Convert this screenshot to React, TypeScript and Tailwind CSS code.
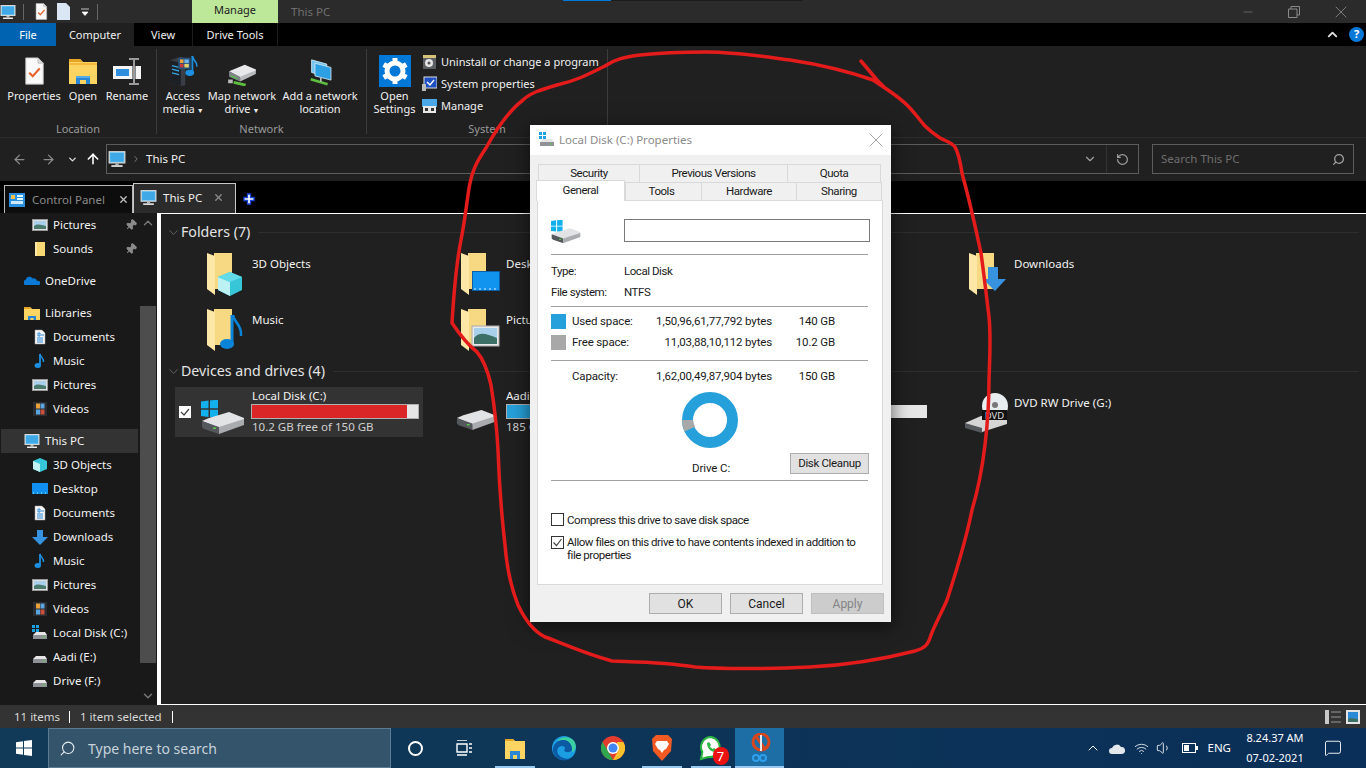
import { ChevronDown, ChevronUp, ArrowLeft, ArrowRight, ArrowUp, RotateCw, Search, Pin, Wifi, Volume1, X, Minus, MessageSquare } from "lucide-react";
import type { ReactNode } from "react";

function PcIcon({ size = 16 }: { size?: number }) {
  return (
    <svg width={size} height={size} viewBox="0 0 16 16">
      <rect x="1" y="1.5" width="14" height="10" fill="#7fd0f5" stroke="#d8d8d8" />
      <rect x="2" y="2.5" width="12" height="8" fill="#3fa9e8" />
      <rect x="6.5" y="12" width="3" height="1.5" fill="#bbb" />
      <rect x="3" y="13.5" width="10" height="1.5" fill="#e8e8e8" />
    </svg>
  );
}

function PagePropsIcon({ h = 28 }: { h?: number }) {
  return (
    <svg width={h * 0.75} height={h} viewBox="0 0 24 32">
      <path d="M2 1h14l6 6v24H2z" fill="#fafafa" stroke="#bbb" />
      <path d="M16 1v6h6" fill="#ddd" stroke="#bbb" />
      <path d="M6 18l4 4 8-9" fill="none" stroke="#e8632c" strokeWidth="2.5" />
    </svg>
  );
}

function OpenFolderIcon() {
  return (
    <svg width="28" height="25" viewBox="0 0 28 25">
      <path d="M0 0h11l3 3h14v22H0z" fill="#fcd462" />
      <path d="M0 0h11l3 3H0z" fill="#e5a526" />
      <path d="M0 4h28v2H0z" fill="#f4b93c" />
      <path d="M7 25v-8h14v8h-4v-4h-6v4z" fill="#2b87d3" />
      <path d="M7 17h14v2H7z" fill="#56abe8" />
    </svg>
  );
}

function RenameIcon() {
  return (
    <svg width="28" height="27" viewBox="0 0 28 27">
      <rect x="0" y="8" width="28" height="13" fill="#f5f5f5" />
      <rect x="3" y="11" width="13" height="7" fill="#2f8fde" />
      <rect x="19" y="8" width="4" height="13" fill="#8a8a8a" />
      <path d="M16 1h10M21 1v25M16 26h10" stroke="#9a9a9a" strokeWidth="2" fill="none" />
    </svg>
  );
}

function MediaIcon() {
  return (
    <svg width="31" height="32" viewBox="0 0 34 36">
      <path d="M2 6l12-4 5 2v30l-5 1-12-3z" fill="#3a3f47" />
      <path d="M2 6l12 3v26L2 32z" fill="#1d2024" />
      <path d="M4 12l8 2M4 16l8 2M4 20l8 2" stroke="#36a3e0" strokeWidth="1.5" />
      <rect x="11" y="3" width="14" height="13" fill="#28507a" />
      <rect x="13" y="5" width="4" height="4" fill="#e9a33a" />
      <rect x="18" y="5" width="5" height="4" fill="#6fb4e6" />
      <rect x="13" y="10" width="4" height="4" fill="#c93d3d" />
      <rect x="18" y="10" width="5" height="4" fill="#e0d16a" />
      <path d="M27 1c0 5 6 6 5 12" stroke="#1c8fe0" strokeWidth="2" fill="none" />
      <path d="M27 1v18" stroke="#1c8fe0" strokeWidth="2" />
      <ellipse cx="24" cy="20" rx="5" ry="3.5" fill="#1c8fe0" />
    </svg>
  );
}

function NetDriveIcon() {
  return (
    <svg className="mt-[6px]" width="32" height="24" viewBox="0 0 34 26">
      <path d="M3 10l17-7 12 5v2L15 17z" fill="#e8e8ea" />
      <path d="M3 10l12 6v5L3 16z" fill="#7f8286" />
      <path d="M15 16l17-7v4l-17 8z" fill="#b8babd" />
      <path d="M5 15l7 3" stroke="#58c34a" strokeWidth="1.5" />
      <path d="M8 22l13 3" stroke="#5fbf3f" strokeWidth="3" />
      <rect x="2" y="19" width="5" height="4" fill="#bbb" />
    </svg>
  );
}

function NetLocIcon() {
  return (
    <svg className="mt-[3px]" width="28" height="27" viewBox="0 0 30 32">
      <path d="M5 1l18 5v15L5 16z" fill="#74c6ef" stroke="#d0e6f2" />
      <path d="M9 5l19 5v15L9 20z" fill="#2d9fe3" stroke="#d0e6f2" />
      <path d="M4 24l20 6" stroke="#5fbf3f" strokeWidth="3" />
      <path d="M16 22v5" stroke="#bbb" strokeWidth="2" />
    </svg>
  );
}

function GearTileIcon() {
  return (
    <svg width="32" height="32" viewBox="0 0 32 32">
      <rect width="32" height="32" fill="#0078d7" />
      <circle cx="16" cy="16" r="8" fill="none" stroke="#fff" strokeWidth="5" />
      <path d="M16 3v6M16 23v6M4.700 9.500l5 3M22.300 19.500l5 3M4.700 22.500l5-3M22.300 12.500l5-3" stroke="#fff" strokeWidth="5" />
    </svg>
  );
}

function WinLogo({ size = 16, color = "#1ba1e2" }: { size?: number; color?: string }) {
  return (
    <svg width={size} height={size} viewBox="0 0 16 16">
      <path d="M0 2.2l7-1v6.3H0zM8 1l8-1v7.5H8zM0 8.5h7v6.3l-7-1zM8 8.500h8V16l-8-1z" fill={color} />
    </svg>
  );
}

function DriveSmall({ win = false }: { win?: boolean }) {
  return (
    <svg width="16" height="16" viewBox="0 0 16 16">
      {win && <path d="M0 0h3v3H0zM4 0h3v3H4zM0 4h3v3H0zM4 4h3v3H4z" fill="#1ba1e2" />}
      <path d="M1 10l3-3h9l2 3z" fill="#e5e5e5" />
      <rect x="1" y="10" width="14" height="4" fill="#8f9296" />
      <rect x="11" y="11.5" width="2" height="1" fill="#61d04f" />
    </svg>
  );
}

function DriveLarge({ win = false, w = 44 }: { win?: boolean; w?: number }) {
  return (
    <svg width={w} height={(w * 34) / 44} viewBox="0 0 44 34">
      {win && <path d="M0 1.500l7.500-1v7.800H0zM9 .5L17-.5v8.800H9zM0 9.700h7.500V17L0 16zM9 9.700h8V18l-8-1z" fill="#13b0ee" />}
      <path d="M1 21l7-3 20-6 15 6v3L18 28z" fill="#e2e3e5" />
      <path d="M1 21l17 6v7L3 29l-2-2z" fill="#54575b" />
      <path d="M18 27l25-8v6l-25 9z" fill="#a9abae" />
      <rect x="12" y="27.500" width="3" height="1.500" fill="#58d04a" />
    </svg>
  );
}

function FolderBase({ children }: { children?: ReactNode }) {
  return (
    <svg width="40" height="43" viewBox="0 0 40 43">
      <path d="M7 0h18v36H7z" fill="#f7d883" />
      <path d="M0 0l8 3v39l-8-6z" fill="#fde7a6" />
      {children}
    </svg>
  );
}

function FolderTile({ kind }: { kind: string }) {
  if (kind === "cube") {
    return (
      <FolderBase>
        <path d="M11 24l12-5 12 5v13l-12 6-12-6z" fill="#36c6d8" />
        <path d="M11 24l12 5v14l-12-6z" fill="#bdf2f4" />
        <path d="M23 29l12-5-12-5-12 5z" fill="#64dbe8" />
      </FolderBase>
    );
  }
  if (kind === "note") {
    return (
      <FolderBase>
        <path d="M25 6v29" stroke="#0a84d8" strokeWidth="3" />
        <path d="M26 6c1 8 9 9 8 21" stroke="#0a84d8" strokeWidth="2.500" fill="none" />
        <ellipse cx="20" cy="35" rx="7" ry="5" fill="#0a84d8" />
      </FolderBase>
    );
  }
  if (kind === "desk") {
    return (
      <FolderBase>
        <rect x="11.500" y="18.500" width="27" height="19" fill="#1094f0" stroke="#0a5fa8" />
        <path d="M13 36h25" stroke="#d8efff" strokeWidth="1" strokeDasharray="2 3" />
      </FolderBase>
    );
  }
  if (kind === "pic") {
    return (
      <FolderBase>
        <rect x="11" y="17" width="27" height="20" fill="#eaeaea" stroke="#aaa" />
        <rect x="13" y="19" width="23" height="16" fill="#a9d0ea" />
        <path d="M13 29c6-7 12-4 23 0v6H13z" fill="#3c6f66" />
      </FolderBase>
    );
  }
  return (
    <FolderBase>
      <path d="M19 14h10v12h8L26 38 14 26h5z" fill="#3793e0" />
    </FolderBase>
  );
}

function DvdIcon() {
  return (
    <svg width="44" height="40" viewBox="0 0 44 40">
      <circle cx="31" cy="13" r="13" fill="#e8eef0" />
      <circle cx="31" cy="12" r="3" fill="#777" />
      <path d="M1 30l16-7 26 2v6L18 39 1 34z" fill="#d5d5d5" />
      <path d="M1 30l17 5v5L1 35z" fill="#55585c" />
      <rect x="18" y="17" width="25" height="10" fill="#111" />
      <text x="30.500" y="25.500" fontSize="9.500" fill="#ddd" textAnchor="middle" fontFamily="Noto Sans">DVD</text>
    </svg>
  );
}

function NavIcon({ kind }: { kind: string }) {
  switch (kind) {
    case "pictures":
      return (
        <svg width="16" height="16" viewBox="0 0 16 16">
          <rect x="0.5" y="2.5" width="15" height="11" fill="#ddd" stroke="#999" />
          <rect x="2" y="4" width="12" height="8" fill="#a9d0ea" />
          <path d="M2 9c4-3 7-1 12 0v3H2z" fill="#4a7a6c" />
        </svg>
      );
    case "sounds":
      return (
        <svg width="16" height="16" viewBox="0 0 16 16">
          <path d="M3 1h10v14H3z" fill="#f8d775" />
          <path d="M3 1h2v14H3z" fill="#fde7a6" />
        </svg>
      );
    case "onedrive":
      return (
        <svg width="16" height="16" viewBox="0 0 16 16">
          <path d="M1 12a2.600 2.600 0 0 1 .6-5 4 4 0 0 1 7.200-1.600A3.400 3.400 0 0 1 13 8a2.200 2.200 0 0 1 2 4z" fill="#0a7ad6" />
        </svg>
      );
    case "libraries":
      return (
        <svg width="16" height="16" viewBox="0 0 16 16">
          <path d="M0 2h6l2 2h8v11H0z" fill="#fcd462" />
          <path d="M0 2h6l2 2H0z" fill="#e5a526" />
          <path d="M4 15v-4h8v4H9.500v-2h-3v2z" fill="#2b87d3" />
        </svg>
      );
    case "docs":
      return (
        <svg width="16" height="16" viewBox="0 0 16 16">
          <path d="M3 1h7l3 3v11H3z" fill="#f4f4f4" stroke="#aaa" strokeWidth=".5" />
          <path d="M6 4h2v3H6zM9 6h3M5 9h6M5 11h6M5 13h6" stroke="#2b8ad8" strokeWidth="1" fill="none" />
        </svg>
      );
    case "music":
      return (
        <svg width="16" height="16" viewBox="0 0 16 16">
          <path d="M8 1v11" stroke="#1c8fe0" strokeWidth="1.800" />
          <path d="M8 1c1 4 4 4 3.500 8" stroke="#1c8fe0" strokeWidth="1.500" fill="none" />
          <ellipse cx="5.800" cy="12.500" rx="3.200" ry="2.500" fill="#1c8fe0" />
        </svg>
      );
    case "videos":
      return (
        <svg width="16" height="16" viewBox="0 0 16 16">
          <rect x="1" y="1" width="14" height="14" fill="#2a2c30" />
          <rect x="4" y="2.500" width="4" height="5" fill="#e9a33a" />
          <rect x="8.500" y="2.500" width="4" height="5" fill="#5aa5e0" />
          <rect x="4" y="8.500" width="4" height="5" fill="#5aa5e0" />
          <rect x="8.500" y="8.500" width="4" height="5" fill="#c9503d" />
        </svg>
      );
    case "cube":
      return (
        <svg width="16" height="16" viewBox="0 0 16 16">
          <path d="M1 4l7-3 7 3v8l-7 3-7-3z" fill="#36c6d8" />
          <path d="M1 4l7 3v8l-7-3z" fill="#c2f2f4" />
        </svg>
      );
    case "desktop":
      return (
        <svg width="16" height="16" viewBox="0 0 16 16">
          <rect x="0" y="2" width="16" height="11" fill="#0f8ff0" />
          <path d="M1 12h14" stroke="#dff" strokeWidth=".8" strokeDasharray="1 3" />
        </svg>
      );
    case "downloads":
      return (
        <svg width="16" height="16" viewBox="0 0 16 16">
          <path d="M5 1h6v7h5l-8 8-8-8h5z" fill="#3793e0" />
        </svg>
      );
    case "cdrive":
      return <DriveSmall win />;
    case "drive":
      return <DriveSmall />;
    default:
      return <PcIcon />;
  }
}

type NavRow = { label: string; icon: string; indent: boolean; pin?: boolean; gap?: boolean; selected?: boolean };

const navRows: NavRow[] = [
  { label: "Pictures", icon: "pictures", indent: true, pin: true },
  { label: "Sounds", icon: "sounds", indent: true, pin: true },
  { label: "OneDrive", icon: "onedrive", indent: false, gap: true },
  { label: "Libraries", icon: "libraries", indent: false, gap: true },
  { label: "Documents", icon: "docs", indent: true },
  { label: "Music", icon: "music", indent: true },
  { label: "Pictures", icon: "pictures", indent: true },
  { label: "Videos", icon: "videos", indent: true },
  { label: "This PC", icon: "pc", indent: false, gap: true, selected: true },
  { label: "3D Objects", icon: "cube", indent: true },
  { label: "Desktop", icon: "desktop", indent: true },
  { label: "Documents", icon: "docs", indent: true },
  { label: "Downloads", icon: "downloads", indent: true },
  { label: "Music", icon: "music", indent: true },
  { label: "Pictures", icon: "pictures", indent: true },
  { label: "Videos", icon: "videos", indent: true },
  { label: "Local Disk (C:)", icon: "cdrive", indent: true },
  { label: "Aadi (E:)", icon: "drive", indent: true },
  { label: "Drive (F:)", icon: "drive", indent: true },
];

function Sidebar() {
  return (
    <aside className="flex w-[157px] shrink-0 bg-[#191919]">
      <div className="w-[140px] shrink-0">
        {navRows.map((row, i) => (
          <div key={i} className={row.gap ? "mt-2" : ""}>
            <div className={`relative flex h-6 items-center ${row.indent ? "pl-8" : "pl-6"} ${row.selected ? "ml-px mr-[2px] bg-[#333333] pl-[23px]" : ""}`}>
              <NavIcon kind={row.icon} />
              <span className="ml-[5px] text-[11.5px] text-[#f2f2f2]">{row.label}</span>
              {row.pin && <Pin size={12} className="absolute right-[3px] top-[6px] rotate-45 fill-[#8a8a8a] text-[#8a8a8a]" />}
            </div>
          </div>
        ))}
      </div>
      <div className="flex w-[16px] shrink-0 flex-col">
        <div className="flex h-[93px] justify-center pt-[3px]">
          <ChevronUp size={14} className="text-[#777777]" strokeWidth={2.5} />
        </div>
        <div className="h-[357px] bg-[#4d4d4d]" />
        <div className="flex flex-1 items-end justify-center pb-[2px]">
          <ChevronDown size={14} className="text-[#777777]" strokeWidth={2.5} />
        </div>
      </div>
    </aside>
  );
}

function SectionHead({ title }: { title: string }) {
  return (
    <div className="flex h-[24px] items-center">
      <ChevronDown size={15} className="ml-[4px] text-[#777777]" strokeWidth={1.2} />
      <span className="text-[14.2px] text-[#e4e4e4]">{title}</span>
      <div className="ml-2 mr-[7px] h-px flex-1 bg-[#2e2e2e]" />
    </div>
  );
}

function FolderCell({ kind, label }: { kind: string; label: string }) {
  return (
    <div className="flex h-[56px] w-[254px] pl-[45px]">
      <div className="w-[45px] shrink-0 pt-[8px]">
        <FolderTile kind={kind} />
      </div>
      <span className="pt-[10px] text-[11.5px] text-[#f2f2f2]">{label}</span>
    </div>
  );
}

function DriveBar({ used, fill }: { used: string; fill: string }) {
  return (
    <div className="h-[15px] w-[168px] border border-[#b0b0b0] bg-[#e6e6e6]">
      <div className={`h-full ${used} ${fill}`} />
    </div>
  );
}

function ExplorerMain() {
  return (
    <main className="relative flex-1 border-y border-l-4 border-white bg-[#202020] pl-[1px] pt-[6px]">
      <SectionHead title="Folders (7)" />
      <div className="mt-[1px] flex flex-wrap">
        <FolderCell kind="cube" label="3D Objects" />
        <FolderCell kind="desk" label="Desktop" />
        <div className="h-[56px] w-[254px]" />
        <FolderCell kind="down" label="Downloads" />
        <FolderCell kind="note" label="Music" />
        <FolderCell kind="pic" label="Pictures" />
      </div>
      <div className="mt-[2px]">
        <SectionHead title="Devices and drives (4)" />
      </div>
      <div className="mt-[4px] flex pl-[13px]">
        <div className="flex h-[50px] w-[248px] bg-[#333333]">
          <div className="ml-1 mt-[19px] flex h-[12px] w-[12px] items-center justify-center bg-white">
            <svg width="10" height="10" viewBox="0 0 10 10">
              <path d="M1 5l3 3 5-6" fill="none" stroke="#444" strokeWidth="1.2" />
            </svg>
          </div>
          <div className="ml-[10px] mt-[13px] w-[50px]">
            <DriveLarge win />
          </div>
          <div>
            <div className="mt-[1px] pl-px text-[11.5px] leading-[16px] text-[#f2f2f2]">Local Disk (C:)</div>
            <DriveBar used="w-[155px]" fill="bg-[#da2626]" />
            <div className="pl-px text-[11.5px] leading-[16px] text-[#d0d0d0]">10.2 GB free of 150 GB</div>
          </div>
        </div>
        <div className="ml-[33px] flex w-[221px]">
          <div className="mt-[12px] w-[50px]">
            <DriveLarge w={40} />
          </div>
          <div>
            <div className="mt-[1px] text-[11.5px] leading-[16px] text-[#f2f2f2]">Aadi (E:)</div>
            <DriveBar used="w-[96px]" fill="bg-[#26a0da]" />
            <div className="text-[11.5px] leading-[16px] text-[#d0d0d0]">185 GB free of 300 GB</div>
          </div>
        </div>
        <div className="flex w-[254px] justify-end pr-[4px]">
          <div className="mt-[18px] h-[13px] w-[60px] bg-[#e6e6e6]" />
        </div>
        <div className="ml-[33px] flex">
          <div className="mt-[6px] w-[50px]">
            <DvdIcon />
          </div>
          <div className="mt-[8px] text-[11.5px] leading-[16px] text-[#f2f2f2]">DVD RW Drive (G:)</div>
        </div>
      </div>
    </main>
  );
}

function RibbonBtn({ w, lines, caret, children }: { w: string; lines: string[]; caret?: boolean; children: ReactNode }) {
  return (
    <div className={`flex shrink-0 flex-col items-center ${w}`}>
      <div className="flex h-[34px] items-center justify-center pb-[2px]">{children}</div>
      <div className="text-center text-[11px] leading-[13px] text-[#f0f0f0]">
        {lines.map((l, i) => (
          <div key={i} className="whitespace-nowrap">
            {l}
            {caret && i === lines.length - 1 && <span className="ml-[2px] align-middle text-[7px]">▼</span>}
          </div>
        ))}
      </div>
    </div>
  );
}

function RibbonGroup({ w, label, children }: { w: string; label: string; children: ReactNode }) {
  return (
    <div className={`flex h-full shrink-0 flex-col border-r border-[#3c3c3c] ${w}`}>
      <div className="flex h-[72px] shrink-0 pt-[6px]">{children}</div>
      <div className="text-center text-[11px] leading-[16px] text-[#9a9a9a]">{label}</div>
    </div>
  );
}

function SmallAction({ label, children }: { label: string; children: ReactNode }) {
  return (
    <div className="flex h-4 items-center gap-[4px]">
      {children}
      <span className="whitespace-nowrap text-[11px] text-[#f0f0f0]">{label}</span>
    </div>
  );
}

function Ribbon() {
  return (
    <div className="flex h-[92px] shrink-0 border-b border-[#2d2d2d] bg-[#202020] py-[3px]">
      <RibbonGroup w="w-[157px]" label="Location">
        <RibbonBtn w="w-[60px] ml-[4px]" lines={["Properties"]}><PagePropsIcon /></RibbonBtn>
        <RibbonBtn w="w-[38px]" lines={["Open"]}><OpenFolderIcon /></RibbonBtn>
        <RibbonBtn w="w-[50px]" lines={["Rename"]}><RenameIcon /></RibbonBtn>
      </RibbonGroup>
      <RibbonGroup w="w-[210px]" label="Network">
        <RibbonBtn w="w-[52px]" lines={["Access", "media"]} caret><MediaIcon /></RibbonBtn>
        <RibbonBtn w="w-[66px]" lines={["Map network", "drive"]} caret><NetDriveIcon /></RibbonBtn>
        <RibbonBtn w="w-[90px]" lines={["Add a network", "location"]}><NetLocIcon /></RibbonBtn>
      </RibbonGroup>
      <RibbonGroup w="w-[241px]" label="System">
        <RibbonBtn w="w-[55px]" lines={["Open", "Settings"]}><GearTileIcon /></RibbonBtn>
        <div className="-mt-px flex flex-col gap-[6px]">
          <SmallAction label="Uninstall or change a program">
            <svg width="15" height="16" viewBox="0 0 15 16"><rect x="1" y="1" width="13" height="14" fill="#5b5f63" /><circle cx="7" cy="9" r="4" fill="#e4e4e4" /><circle cx="7" cy="9" r="1.500" fill="#555" /><rect x="1" y="1" width="13" height="3" fill="#d8c27a" /></svg>
          </SmallAction>
          <SmallAction label="System properties">
            <svg width="15" height="16" viewBox="0 0 15 16"><rect x="2" y="1" width="13" height="11" fill="#1e4fc2" stroke="#ddd" /><path d="M5 6l3 3 4-5" stroke="#fff" fill="none" strokeWidth="1.500" /><rect x="0" y="8" width="4" height="7" fill="#bbb" /></svg>
          </SmallAction>
          <SmallAction label="Manage">
            <svg width="15" height="16" viewBox="0 0 15 16"><rect x="0" y="1" width="15" height="8" fill="#4aa8e8" /><rect x="1" y="8" width="13" height="7" fill="#e8e8e8" /><rect x="3" y="10" width="3" height="3" fill="#333" /><rect x="9" y="10" width="3" height="3" fill="#333" /></svg>
          </SmallAction>
        </div>
      </RibbonGroup>
    </div>
  );
}

function TitleBar() {
  return (
    <div className="relative flex h-[23px] shrink-0 items-center bg-[#2b2b2b]">
      <div className="flex w-[192px] items-center">
        <PcIcon />
        <div className="ml-[7px] h-[16px] w-px bg-[#666666]" />
        <div className="ml-[11px] flex h-[18px] w-[13px] items-center">
          <PagePropsIcon h={17} />
        </div>
        <svg className="ml-[9px]" width="13" height="17" viewBox="0 0 13 17"><path d="M0 0h9l4 4v13H0z" fill="#dbe6f5" /></svg>
        <svg className="ml-[11px]" width="8" height="8" viewBox="0 0 8 8"><path d="M0 1h8M1 4h6L4 7.500z" fill="#fff" stroke="#fff" strokeWidth=".7" /></svg>
        <div className="ml-[8px] h-[16px] w-px bg-[#666666]" />
      </div>
      <div className="flex h-full w-[86px] items-center justify-center bg-[#bde89a] pb-[3px] text-[11px] text-[#202020]">Manage</div>
      <span className="ml-[13px] text-[11.5px] text-[#6f6f6f]">This PC</span>
      <div className="absolute left-[563px] top-0 h-px w-[48px] bg-[#0078d7]" />
      <div className="absolute left-[611px] top-0 h-px w-[192px] bg-[#1c1c1c]" />
      <div className="ml-auto flex items-center text-[#8a8a8a]">
        <Minus size={14} strokeWidth={1} className="mr-[33px]" />
        <svg className="mr-[31px]" width="12" height="12" viewBox="0 0 12 12"><path d="M.5 3h8.500v8.500H.5zM3 3V.5h8.500V9H9" fill="none" stroke="#8a8a8a" /></svg>
        <X size={20} strokeWidth={1} className="mr-[15px]" />
      </div>
    </div>
  );
}

function MenuTabs() {
  return (
    <div className="flex h-[23px] shrink-0 items-center bg-black text-[11px] text-[#f0f0f0]">
      <div className="flex h-full w-[56px] items-center justify-center bg-[#0063b1] pt-px text-white">File</div>
      <div className="flex h-full w-[78px] items-center justify-center bg-[#202020] pt-px">Computer</div>
      <div className="flex h-full w-[58px] items-center justify-center pt-px">View</div>
      <div className="flex h-full w-[86px] items-center justify-center border-x border-[#1c1c1c] pt-px">Drive Tools</div>
      <div className="ml-auto flex items-center">
        <ChevronUp size={15} strokeWidth={3} className="mr-[9px] text-[#e0e0e0]" />
        <div className="mr-[2px] flex h-[15px] w-[15px] items-center justify-center rounded-full bg-[#0a78d7] text-[11px] font-bold text-white">?</div>
      </div>
    </div>
  );
}

function AddressBar() {
  return (
    <div className="flex h-[43px] shrink-0 items-center bg-[#202020] pb-[1px]">
      <div className="flex w-[106px] items-center pl-[12px]">
        <ArrowLeft size={15} className="text-[#8a8a8a]" />
        <ArrowRight size={15} className="ml-[14px] text-[#8a8a8a]" />
        <ChevronDown size={11} strokeWidth={3} className="ml-[11px] text-[#dddddd]" />
        <ArrowUp size={16} strokeWidth={2.4} className="ml-[7px] text-white" />
      </div>
      <div className="flex h-[30px] w-[1033px] items-center border border-[#5c5c5c] pl-[1px]">
        <PcIcon size={18} />
        <ChevronDown size={10} className="ml-[5px] -rotate-90 text-[#8a8a8a]" />
        <span className="ml-[5px] text-[11.5px] text-[#f0f0f0]">This PC</span>
        <div className="ml-auto flex h-full w-[32px] items-center justify-center">
          <ChevronDown size={14} strokeWidth={2} className="text-[#a0a0a0]" />
        </div>
        <div className="flex h-full w-[32px] items-center justify-center border-l border-[#333333]">
          <RotateCw size={13} strokeWidth={2.2} className="-scale-x-100 text-[#a0a0a0]" />
        </div>
      </div>
      <div className="ml-[13px] flex h-[30px] w-[202px] items-center border border-[#5c5c5c] px-[8px]">
        <span className="text-[11.5px] text-[#6f6f6f]">Search This PC</span>
        <Search size={13} strokeWidth={2.4} className="ml-auto -scale-x-100 text-[#a0a0a0]" />
      </div>
    </div>
  );
}

function TabStrip() {
  return (
    <div className="flex h-[32px] shrink-0 items-end bg-black pl-[4px]">
      <div className="flex h-[28px] w-[129px] items-center border-x border-t border-[#b8b8b8] bg-[#0d0d0d] pl-[4px]">
        <svg width="16" height="14" viewBox="0 0 16 14"><rect width="16" height="14" fill="#2a8fe0" /><rect x="2" y="2" width="4" height="4" fill="#f2c14e" /><rect x="8" y="2" width="6" height="2" fill="#dff" /><rect x="8" y="5" width="6" height="2" fill="#dff" /><rect x="2" y="8" width="12" height="3" fill="#cfe8ff" /></svg>
        <span className="ml-[7px] text-[11.5px] text-[#8a8a8a]">Control Panel</span>
        <X size={11} strokeWidth={3} className="ml-auto mr-[3px] text-[#bbbbbb]" />
      </div>
      <div className="flex h-[30px] w-[103px] items-center border-x border-t border-[#c8c8c8] bg-[#2b2b2b] pb-[2px] pl-[6px]">
        <PcIcon size={17} />
        <span className="ml-[6px] text-[11.5px] text-[#f0f0f0]">This PC</span>
        <X size={11} strokeWidth={3} className="ml-auto mr-[11px] text-[#8a8a8a]" />
      </div>
      <svg className="mb-[8px] ml-[7px]" width="12" height="12" viewBox="0 0 12 12"><path d="M4.500 1h3v3.500H11v3H7.500V11h-3V7.500H1v-3h3.500z" fill="#fff" stroke="#1a46d8" strokeWidth="1.300" /></svg>
    </div>
  );
}

function StatusBar() {
  return (
    <div className="flex h-[23px] shrink-0 items-center bg-[#333333] text-[11.5px] text-[#d8d8d8]">
      <span className="ml-[14px]">11 items</span>
      <div className="ml-[9px] h-[12px] w-px bg-white" />
      <span className="ml-[10px]">1 item selected</span>
      <div className="ml-[10px] h-[12px] w-px bg-white" />
      <div className="ml-auto mr-[6px] flex items-center gap-[5px]">
        <svg width="16" height="14" viewBox="0 0 16 14"><rect x="0" y="0" width="4" height="14" fill="#c8c8c8" /><path d="M6 2h10M6 7h10M6 12h10" stroke="#777" strokeWidth="1.500" /></svg>
        <svg width="14" height="14" viewBox="0 0 14 14"><rect width="14" height="14" fill="#e4e4e4" /><rect x="2" y="2" width="10" height="10" fill="#2b8ad8" /><path d="M2 9c4-2 6 0 10 0v3H2z" fill="#3c6f66" /></svg>
      </div>
    </div>
  );
}

function TaskApp({ active, bar, children }: { active?: boolean; bar?: string; children: ReactNode }) {
  return (
    <div className={`relative flex h-full w-[49px] shrink-0 items-center justify-center ${active ? "bg-[#1c6ea4]" : ""}`}>
      {children}
      {bar && <div className={`absolute bottom-0 h-[2px] bg-[#99c9ee] ${bar}`} />}
    </div>
  );
}

function Taskbar() {
  return (
    <div className="flex h-[40px] shrink-0 items-center bg-gradient-to-r from-[#103a57] to-[#0a2f58]">
      <div className="flex w-[48px] justify-center">
        <WinLogo color="#ffffff" />
      </div>
      <div className="flex h-full w-[343px] items-center border border-[#5b7c92] bg-[#34546b] pl-[10px]">
        <Search size={17} strokeWidth={1.5} className="-scale-x-100 text-[#e8eef2]" />
        <span className="ml-[12px] text-[14px] text-[#c7d2da]">Type here to search</span>
      </div>
      <div className="flex h-full">
        <div className="flex w-[49px] items-center justify-center">
          <div className="h-[15px] w-[15px] rounded-full border-2 border-white" />
        </div>
        <div className="flex w-[50px] items-center justify-center pr-[4px]">
          <svg width="18" height="16" viewBox="0 0 18 16"><path d="M3 0h10M3 15h10M3 4h10v8H3zM15 4h3M15 8h3M15 12h3" fill="none" stroke="#fff" strokeWidth="1.400" /></svg>
        </div>
        <TaskApp bar="w-[40px]">
          <svg width="24" height="24" viewBox="0 0 24 24"><path d="M2 3h8l2 2h10v18H2z" fill="#fcd462" /><path d="M2 3h8l2 2H2z" fill="#e5a526" /><path d="M7 23v-8h10v8h-3v-4h-4v4z" fill="#2b87d3" /></svg>
        </TaskApp>
        <TaskApp>
          <svg width="26" height="26" viewBox="0 0 26 26"><circle cx="13" cy="13" r="12" fill="#1b9de2" /><path d="M2 15C2 8 9 4 14 5c6 1 9 6 7 10-2 3-7 3-8 0 2-1 1-4-2-4-4 0-6 4-4 8 2 3 7 6 13 4-3 3-9 3-12 1-3-2-6-5-6-9z" fill="#0c59a4" /><path d="M6 6c4-5 13-5 17 0 3 4 2 10-2 11 1-7-3-12-8-12-3 0-5 0-7 1z" fill="#3bd1a0" /></svg>
        </TaskApp>
        <TaskApp>
          <svg width="24" height="24" viewBox="0 0 24 24"><circle cx="12" cy="12" r="12" fill="#e33b2e" /><path d="M1.600 6L7 15l5 9A12 12 0 0 1 1.600 6z" fill="#2fa84f" /><path d="M22.400 6A12 12 0 0 1 12 24l5-9-1-9z" fill="#fbc02d" /><circle cx="12" cy="12" r="6" fill="#fff" /><circle cx="12" cy="12" r="4.500" fill="#4285f4" /></svg>
        </TaskApp>
        <TaskApp bar="w-[40px]">
          <svg width="24" height="26" viewBox="0 0 24 26"><path d="M6 0h12l4 4-1 12-9 10-9-10L2 4z" fill="#f15a22" /><path d="M7 6h10l2 3-3 5-2 1-2 3-2-3-2-1-3-5z" fill="#fff" /></svg>
        </TaskApp>
        <TaskApp bar="w-[40px]">
          <div className="relative">
            <svg width="24" height="26" viewBox="0 0 24 26"><path d="M12 2a10 10 0 0 0-8.600 15L2 24l7-2A10 10 0 1 0 12 2z" fill="#fff" stroke="#2cb742" strokeWidth="2" /><path d="M8 8c0 5 4 9 8 9l2-2-3-2-1 1c-2-1-3-2-3-3l1-1-2-3z" fill="#2cb742" /></svg>
            <div className="absolute -bottom-[4px] -right-[6px] flex h-[18px] w-[16px] items-center justify-center rounded-full bg-[#ee1111] text-[13px] leading-none text-white">7</div>
          </div>
        </TaskApp>
        <TaskApp active bar="w-[49px]">
          <svg width="22" height="30" viewBox="0 0 22 30"><circle cx="12" cy="9" r="8" fill="none" stroke="#d8461d" strokeWidth="3" /><path d="M6 2l10 14" stroke="#d8461d" strokeWidth="3" /><path d="M12 2v16" stroke="#e8e8e8" strokeWidth="2" /><circle cx="7" cy="25" r="3" fill="none" stroke="#2fa0ee" strokeWidth="2" /><circle cx="14" cy="25" r="3" fill="none" stroke="#2fa0ee" strokeWidth="2" /></svg>
        </TaskApp>
      </div>
      <div className="ml-auto flex h-full items-center text-white">
        <ChevronUp size={16} strokeWidth={1.5} />
        <svg className="ml-[8px]" width="16" height="14" viewBox="0 0 16 14"><path d="M3 13a3 3 0 0 1 0-6 5 5 0 0 1 9-1 3.500 3.500 0 0 1 1 7z" fill="#e2e8ec" /></svg>
        <Wifi size={15} strokeWidth={1.5} className="ml-[9px] text-[#d8e0e6]" />
        <Volume1 size={16} strokeWidth={1.5} className="ml-[7px] text-[#d8e0e6]" />
        <svg className="ml-[10px]" width="16" height="10" viewBox="0 0 16 10"><rect x=".5" y=".5" width="13" height="9" fill="none" stroke="#fff" /><rect x="2" y="2" width="5" height="6" fill="#fff" /><rect x="14" y="3" width="2" height="4" fill="#fff" /></svg>
        <span className="ml-[9px] text-[11.5px]">ENG</span>
        <div className="ml-[13px] flex w-[62px] flex-col items-center text-[11px] leading-[20px]">
          <span className="whitespace-nowrap">8.24.37 AM</span>
          <span className="whitespace-nowrap">07-02-2021</span>
        </div>
        <MessageSquare size={18} strokeWidth={1.2} className="ml-[18px] mr-[24px]" />
      </div>
    </div>
  );
}

function DlgTab({ w, label }: { w: string; label: string }) {
  return (
    <div className={`flex h-[18px] shrink-0 items-center justify-center border border-b-0 border-[#d9d9d9] bg-[#f0f0f0] text-[11.5px] text-[#1a1a1a] ${w}`}>
      {label}
    </div>
  );
}

function Rule({ className = "" }: { className?: string }) {
  return <div className={`h-px w-[317px] bg-[#a0a0a0] ${className}`} />;
}

function SpaceRow({ swatch, label, bytes, gb }: { swatch?: string; label: string; bytes: string; gb: string }) {
  return (
    <div className="flex h-[15px] items-center text-[11.5px] tracking-[-0.15px] text-[#1a1a1a]">
      <div className={`h-[15px] w-[15px] shrink-0 ${swatch ?? ""}`} />
      <span className="ml-[6px] w-[74px] whitespace-nowrap">{label}</span>
      <span className="w-[126px] whitespace-nowrap text-right">{bytes}</span>
      <span className="w-[63px] whitespace-nowrap text-right">{gb}</span>
    </div>
  );
}

function DlgButton({ label, disabled }: { label: string; disabled?: boolean }) {
  return (
    <div className={`flex h-[21px] w-[73px] items-center justify-center border text-[12px] ${disabled ? "border-[#bfbfbf] bg-[#cccccc] text-[#838383]" : "border-[#adadad] bg-[#e1e1e1] text-[#1a1a1a]"}`}>
      {label}
    </div>
  );
}

function PropertiesDialog() {
  return (
    <div className="absolute left-[530px] top-[125px] flex h-[497px] w-[361px] flex-col bg-[#f0f0f0] font-['Roboto',sans-serif] tracking-[-0.45px] shadow-[0_4px_18px_rgba(0,0,0,0.6)]">
      <div className="flex h-[30px] shrink-0 items-center bg-white pl-[9px]">
        <DriveSmall win />
        <span className="ml-[4px] font-['Noto_Sans',sans-serif] text-[11.5px] tracking-normal text-[#8a8a8a]">Local Disk (C:) Properties</span>
        <X size={24} strokeWidth={0.8} className="ml-auto mr-[3px] text-[#8a8a8a]" />
      </div>
      <div className="ml-[8px] mt-[9px] flex">
        <DlgTab w="w-[102px]" label="Security" />
        <DlgTab w="w-[149px] -ml-px" label="Previous Versions" />
        <DlgTab w="w-[94px] -ml-px" label="Quota" />
      </div>
      <div className="relative z-10 ml-[6px] flex items-end">
        <div className="-mt-[2px] mb-[-1px] flex h-[21px] w-[89px] items-center justify-center border border-b-0 border-[#d9d9d9] bg-white pb-px text-[11.5px] text-[#1a1a1a]">General</div>
        <DlgTab w="w-[77px] pr-[4px]" label="Tools" />
        <DlgTab w="w-[96px] -ml-px" label="Hardware" />
        <DlgTab w="w-[86px] -ml-px" label="Sharing" />
      </div>
      <div className="ml-[7px] h-[385px] w-[346px] border border-[#d9d9d9] bg-white pl-[13px]">
        <div className="flex pt-[18px]">
          <div className="w-[73px] pt-[1px]">
            <DriveLarge win w={30} />
          </div>
          <div className="h-[23px] w-[246px] border border-[#7a7a7a]" />
        </div>
        <Rule className="mt-[11px]" />
        <div className="mt-[9px] flex h-[15px] items-center text-[11.5px] text-[#1a1a1a]">
          <span className="w-[73px]">Type:</span>
          <span>Local Disk</span>
        </div>
        <div className="mt-[6px] flex h-[15px] items-center text-[11.5px] text-[#1a1a1a]">
          <span className="w-[73px]">File system:</span>
          <span>NTFS</span>
        </div>
        <Rule className="mt-[6px]" />
        <div className="mt-[7px]">
          <SpaceRow swatch="bg-[#26a0da]" label="Used space:" bytes="1,50,96,61,77,792 bytes" gb="140 GB" />
        </div>
        <div className="mt-[6px]">
          <SpaceRow swatch="bg-[#a8a8a8]" label="Free space:" bytes="11,03,88,10,112 bytes" gb="10.2 GB" />
        </div>
        <Rule className="mt-[10px]" />
        <div className="mt-[8px]">
          <SpaceRow label="Capacity:" bytes="1,62,00,49,87,904 bytes" gb="150 GB" />
        </div>
        <div className="relative h-[96px]">
          <svg className="absolute left-[131px] top-[8px]" width="56" height="56" viewBox="0 0 56 56">
            <circle cx="28" cy="28" r="22.500" fill="none" stroke="#26a0da" strokeWidth="11" />
            <path d="M0 28a28 28 0 0 0 2.600 11.500l10.500-4.700A17 17 0 0 1 11 28z" fill="#a8a8a8" />
          </svg>
          <span className="absolute left-[141px] top-[77px] text-[11.5px] leading-[15px] tracking-[-0.1px] text-[#1a1a1a]">Drive C:</span>
          <div className="absolute left-[239px] top-[69px] flex h-[21px] w-[79px] items-center justify-center border border-[#adadad] bg-[#e1e1e1] text-[11.5px] tracking-[-0.35px] text-[#1a1a1a]">Disk Cleanup</div>
        </div>
        <Rule />
        <div className="mt-[32px] flex h-[13px] items-center text-[11.5px] leading-[13px] text-[#1a1a1a]">
          <div className="h-[13px] w-[13px] border border-[#333333]" />
          <span className="ml-[3px] translate-y-px">Compress this drive to save disk space</span>
        </div>
        <div className="mt-[10px] flex items-start text-[11.5px] leading-[13px] text-[#1a1a1a]">
          <div className="flex h-[13px] w-[13px] shrink-0 items-center justify-center border border-[#333333]">
            <svg width="11" height="11" viewBox="0 0 11 11"><path d="M1.500 5.500l3 3 5-6.500" fill="none" stroke="#444" strokeWidth="1.200" /></svg>
          </div>
          <span className="ml-[3px] w-[295px]">Allow files on this drive to have contents indexed in addition to file properties</span>
        </div>
      </div>
      <div className="ml-[119px] mt-[8px] flex gap-[8px] tracking-normal">
        <DlgButton label="OK" />
        <DlgButton label="Cancel" />
        <DlgButton label="Apply" disabled />
      </div>
    </div>
  );
}

function RedCircle() {
  return (
    <svg className="pointer-events-none absolute left-0 top-0" width="1366" height="768" viewBox="0 0 1366 768">
      <path
        d="M861 61L877 80L885 88L873 80C850 72 823 65 790 60C760 56 735 52 707 52C690 52 667 52 640 55C625 57 615 59 605 66C585 76 575 81 557 85C540 90 530 93 523 100C510 110 497 128 486 148C478 160 471 170 468 195C466 210 464 225 461 240C458 255 454 290 452 323C460 335 468 345 477 352C484 360 488 372 491 385C495 410 497 430 498 450C499 480 501 510 505 545C507 570 512 590 518 605C526 622 535 632 545 637C560 642 580 652 612 661C640 662 665 662 695 667C720 669 770 669 810 667C850 665 880 660 915 651C925 648 928 645 931 635C936 622 942 612 947 600C955 575 965 545 972 510C978 490 982 470 985 445C988 420 989 400 989 380C990 350 991 335 989 317C987 300 984 275 981 253C977 235 975 225 972 213C968 195 965 185 962 173C960 160 958 152 955 147C952 143 948 142 940 138C934 134 930 131 925 126C918 118 914 112 908 106C900 98 895 95 885 88"
        fill="none"
        stroke="#e31b1b"
        strokeWidth="3.500"
        strokeLinecap="round"
        strokeLinejoin="round"
      />
    </svg>
  );
}

export default function App() {
  return (
    <div className="relative flex h-[768px] w-[1366px] flex-col overflow-hidden bg-[#202020] font-['Noto_Sans',sans-serif] text-white">
      <TitleBar />
      <MenuTabs />
      <Ribbon />
      <AddressBar />
      <TabStrip />
      <div className="flex h-[492px] shrink-0">
        <Sidebar />
        <ExplorerMain />
      </div>
      <StatusBar />
      <Taskbar />
      <PropertiesDialog />
      <RedCircle />
    </div>
  );
}
